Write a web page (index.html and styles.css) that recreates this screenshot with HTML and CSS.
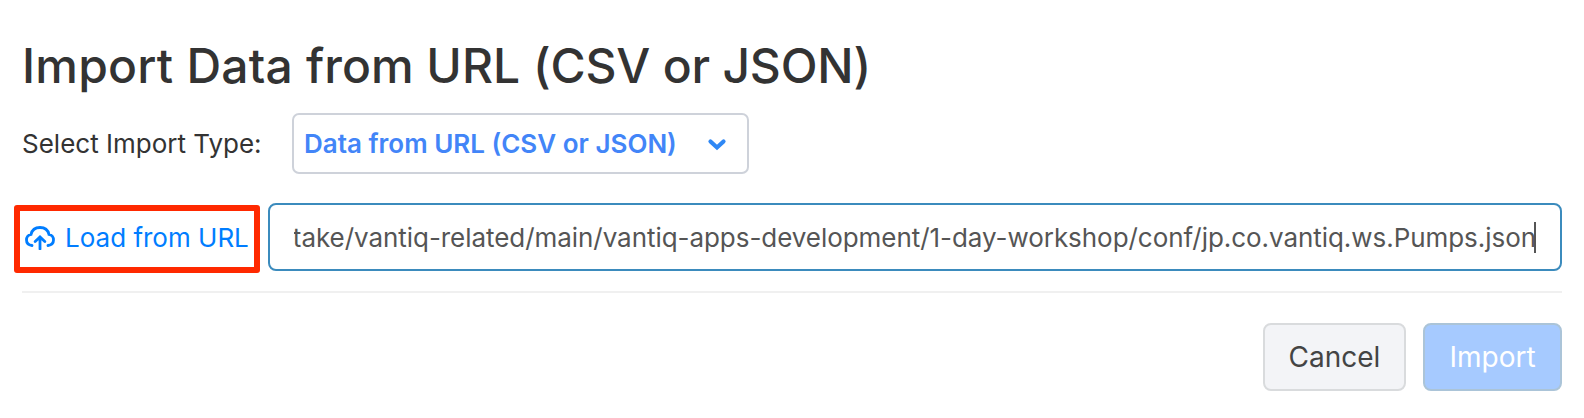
FILE: index.html
```html
<!DOCTYPE html>
<html lang="en"><head><meta charset="utf-8"><title>Import Data</title><link rel="stylesheet" href="styles.css"></head>
<body><main class="dialog">
<h1 class="title"><span class="title-lead">Import Data </span>from URL <span class="title-formats">(CSV or JSON)</span></h1>
<div class="type-row"><span class="label">Select Import Type:</span>
<div class="select"><span class="select-text">Data from URL (CSV or JSON)</span><svg class="chevron" viewBox="0 0 20 14"><path d="M3.500 4.500l6.500 6 6.500-6"/></svg></div></div>
<div class="url-row"><button class="load"><svg class="cloud" viewBox="0 0 30 24"><path d="M7 19.500C3.500 19 1.500 17 1.500 14c0-3 2-5 4.500-5.500C7 4 10.500 1.500 15 1.500S23 4 24 8.500c2.500.5 4.500 2.500 4.500 5.500 0 3-2 5-5.500 5.500M15 23V11.500M10.200 15.500L15 11l4.800 4.500"/></svg><span class="load-text">Load from URL</span></button>
<div class="field"><div class="clip"><span class="url">take/vantiq-related/main/vantiq-apps-development/1-day-workshop/conf/jp.co.vantiq.ws.Pumps.json</span></div><span class="caret"></span></div></div>
<footer class="footer"><button class="btn cancel">Cancel</button><button class="btn import">Import</button></footer>
</main></body></html>
```
FILE: styles.css
```css
*{box-sizing:border-box}
body{margin:0;background:#fff;font-family:Inter,sans-serif;color:#333}
.dialog{padding:36px 22px 0;height:418px}
.title{margin:0;height:60px;line-height:60px;font-size:48px;font-weight:500;white-space:nowrap}
.title-lead{letter-spacing:.22px}
.title-formats{letter-spacing:-.2px}
.type-row{display:flex;align-items:center;margin-top:17px;height:61px}
.label{width:270px;font-size:26px;white-space:nowrap}
.select{width:457px;height:61px;border:2px solid #ced2da;border-radius:7px;display:flex;align-items:center;padding:0 20px 0 10px;justify-content:space-between;color:#4285f8}
.select-text{font-size:26px;font-weight:600;white-space:nowrap}
.chevron{width:20px;height:14px;fill:none;stroke:#2f88f5;stroke-width:4.2;stroke-linecap:round}
.url-row{display:flex;margin:29px 0 0 -8px;height:68px}
.load{flex:none;width:246px;height:68px;margin:2px 8px 0 0;border:6px solid #ff2900;border-radius:3px;background:#fff;color:#007dff;display:flex;align-items:center;padding:0 0 3px 5px;gap:10px;font:26px Inter,sans-serif}
.cloud{width:30px;height:24px;fill:none;stroke:currentColor;stroke-width:2.8;stroke-linecap:round;flex:none}
.load-text{white-space:nowrap}
.field{flex:1;min-width:0;border:2px solid #3b8bbd;border-radius:8px;padding:0 24px;display:flex;align-items:center;position:relative}
.clip{flex:1;min-width:0;display:flex;justify-content:flex-end;overflow:hidden}
.url{font-size:26px;letter-spacing:-.05px;color:#555;padding-top:1px;white-space:nowrap}
.caret{position:absolute;right:24px;top:17px;width:2px;height:31px;background:#555}
.footer{border-top:2px solid #f0f0f0;margin-top:20px;padding-top:30px;display:flex;justify-content:flex-end;gap:17px}
.btn{height:68px;border-radius:8px;font:28px Inter,sans-serif;padding:0}
.cancel{width:143px;background:#f3f4f7;border:2px solid #d9dbdd;color:#444}
.import{width:139px;background:#a6caff;border:2px solid #abc4d8;color:#fff}
```
